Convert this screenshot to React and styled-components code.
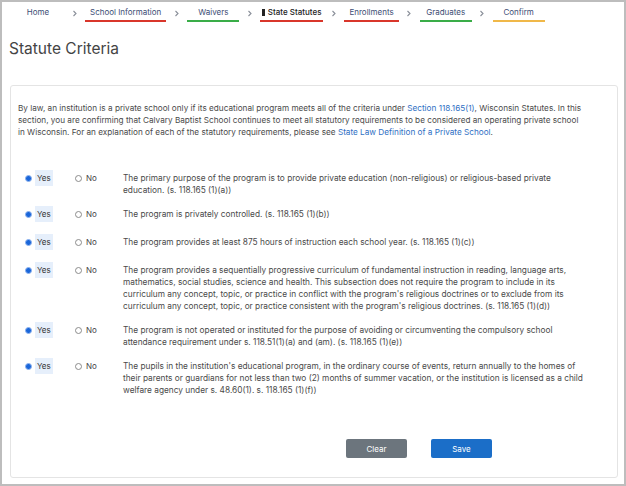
import React from "react";
import styled, { createGlobalStyle } from "styled-components";

// Page data
const steps = [
  { label: "Home", line: "transparent" },
  { label: "School Information", line: "#d9362b" },
  { label: "Waivers", line: "#3aad48" },
  { label: "State Statutes", line: "#d9362b", active: true },
  { label: "Enrollments", line: "#d9362b" },
  { label: "Graduates", line: "#3aad48" },
  { label: "Confirm", line: "#f0b849" },
];

const criteria = [
  [
    "The primary purpose of the program is to provide private education (non-religious) or religious-based private",
    "education. (s. 118.165 (1)(a))",
  ],
  ["The program is privately controlled. (s. 118.165 (1)(b))"],
  ["The program provides at least 875 hours of instruction each school year. (s. 118.165 (1)(c))"],
  [
    "The program provides a sequentially progressive curriculum of fundamental instruction in reading, language arts,",
    "mathematics, social studies, science and health. This subsection does not require the program to include in its",
    "curriculum any concept, topic, or practice in conflict with the program's religious doctrines or to exclude from its",
    "curriculum any concept, topic, or practice consistent with the program's religious doctrines. (s. 118.165 (1)(d))",
  ],
  [
    "The program is not operated or instituted for the purpose of avoiding or circumventing the compulsory school",
    "attendance requirement under s. 118.51(1)(a) and (am). (s. 118.165 (1)(e))",
  ],
  [
    "The pupils in the institution's educational program, in the ordinary course of events, return annually to the homes of",
    "their parents or guardians for not less than two (2) months of summer vacation, or the institution is licensed as a child",
    "welfare agency under s. 48.60(1). s. 118.165 (1)(f))",
  ],
];

function Chevron() {
  return (
    <svg width="6" height="7" viewBox="0 0 6 7">
      <path d="M1.5 1 L4 3.5 L1.5 6" fill="none" stroke="#8a8f99" strokeWidth="1.1" />
    </svg>
  );
}

function App() {
  return (
    <>
      <GlobalStyle />
      <Frame>
        <Crumbs>
          {steps.map((s, i) => (
            <React.Fragment key={s.label}>
              {i > 0 && (
                <Sep>
                  <Chevron />
                </Sep>
              )}
              <Crumb $line={s.line} $active={s.active}>
                {s.active && <Marker />}
                {s.label}
              </Crumb>
            </React.Fragment>
          ))}
        </Crumbs>
        <Title>Statute Criteria</Title>
        <Card>
          <Intro>
            By law, an institution is a private school only if its educational program meets all of the
            criteria under <A>Section 118.165(1)</A>, Wisconsin Statutes. In this
            <br />
            section, you are confirming that Calvary Baptist School continues to meet all statutory
            requirements to be considered an operating private school
            <br />
            in Wisconsin. For an explanation of each of the statutory requirements, please see{" "}
            <A>State Law Definition of a Private School</A>.
          </Intro>
          <Rows>
            {criteria.map((lines, i) => (
              <Row key={i}>
                <Choice>
                  <Radio $on />
                  <YesLabel>Yes</YesLabel>
                </Choice>
                <Choice>
                  <Radio />
                  <NoLabel>No</NoLabel>
                </Choice>
                <Desc>
                  {lines.map((l, j) => (
                    <Line key={j}>{l}</Line>
                  ))}
                </Desc>
              </Row>
            ))}
          </Rows>
          <Footer>
            <Button $bg="#6c757d">Clear</Button>
            <Button $bg="#1b6ec8">Save</Button>
          </Footer>
        </Card>
      </Frame>
    </>
  );
}

const GlobalStyle = createGlobalStyle`
  html, body { margin: 0; padding: 0; background: #fff; }
  body { font-family: Inter, "Open Sans", sans-serif; }
  * { box-sizing: border-box; }
`;

const Frame = styled.div`
  width: 626px;
  height: 486px;
  border: 2px solid #bdbdbd;
  background: #fff;
  display: flex;
  flex-direction: column;
`;

const Crumbs = styled.nav`
  display: flex;
  align-items: flex-start;
  padding: 6px 0 0 10px;
  height: 21px;
`;

const Crumb = styled.div`
  display: flex;
  align-items: center;
  justify-content: center;
  min-width: 52px;
  padding: 0 ${(p) => (p.$active ? 2 : 5)}px 3px;
  font-size: 8px;
  line-height: 9px;
  color: ${(p) => (p.$active ? "#222" : "#3c4d74")};
  font-weight: ${(p) => (p.$active ? 500 : 400)};
  border-bottom: 2px solid ${(p) => p.$line};
  white-space: nowrap;
`;

const Marker = styled.span`
  width: 2.5px;
  height: 7px;
  background: #222;
  margin-right: 3px;
`;

const Sep = styled.div`
  width: 21px;
  display: flex;
  justify-content: center;
  padding-top: 2px;
`;

const Title = styled.h1`
  margin: 16px 0 0 7px;
  font-size: 15.5px;
  line-height: 20px;
  font-weight: 400;
  color: #444;
`;

const Card = styled.div`
  margin: 26px 6px 6px 8px;
  flex: 1;
  border: 1px solid #e4e4e4;
  border-radius: 3px;
  padding: 16px 7px 0;
  display: flex;
  flex-direction: column;
`;

const Intro = styled.p`
  margin: 0;
  font-size: 8.2px;
  line-height: 12px;
  color: #4a4a4a;
  white-space: nowrap;
`;

const A = styled.a`
  color: #2f6fc4;
`;

const Rows = styled.div`
  margin-top: 28px;
  padding-left: 7px;
`;

const Row = styled.div`
  display: grid;
  grid-template-columns: 50px 48px 1fr;
  align-items: start;
  min-height: 28px;
  padding: 6px 0;
`;

const Choice = styled.div`
  display: flex;
  align-items: center;
  height: 12px;
`;

const Radio = styled.span`
  width: 7px;
  height: 7px;
  border-radius: 50%;
  flex: none;
  border: ${(p) => (p.$on ? "1px solid #8fb4f0" : "1px solid #8c8c8c")};
  background: ${(p) => (p.$on ? "#1a66d9" : "#fff")};
`;

const YesLabel = styled.span`
  margin-left: 3px;
  padding: 2px 2px;
  background: #e6effb;
  font-size: 8px;
  line-height: 12px;
  color: #333;
`;

const NoLabel = styled.span`
  margin-left: 4px;
  font-size: 8px;
  line-height: 12px;
  color: #444;
`;

const Desc = styled.div`
  font-size: 8.3px;
  line-height: 12px;
  color: #4a4a4a;
  white-space: nowrap;
`;

const Line = styled.div``;

const Footer = styled.div`
  margin-top: auto;
  display: flex;
  justify-content: flex-end;
  gap: 24px;
  padding: 0 118px 19px 0;
`;

const Button = styled.button`
  width: 61px;
  height: 19px;
  border: none;
  border-radius: 2px;
  background: ${(p) => p.$bg};
  color: #fff;
  font-family: inherit;
  font-size: 8px;
  padding: 0;
`;

export default App;
